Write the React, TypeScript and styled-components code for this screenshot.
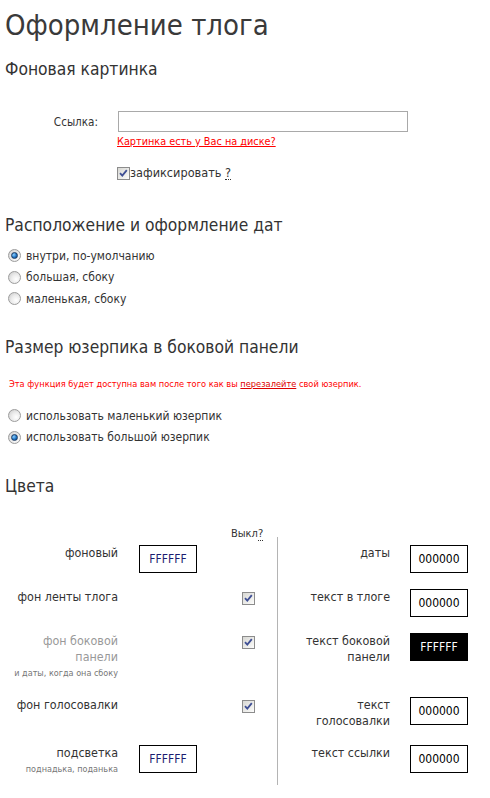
import React from 'react';
import styled, { createGlobalStyle } from 'styled-components';

const GlobalStyle = createGlobalStyle`
  body {
    margin: 0;
    background: #fff;
    color: #333;
    font-family: "DejaVu Sans Condensed", "DejaVu Sans", Verdana, sans-serif;
  }
`;

const Page = styled.div`
  padding: 0 5px 10px;
`;

const Title = styled.h1`
  margin: 5px 0 0;
  font-size: 29px;
  line-height: 40px;
  font-weight: normal;
  color: #3a3a3a;
`;

const Heading = styled.h2<{ $top: number }>`
  margin: ${({ $top }) => $top}px 0 0;
  font-size: 17.3px;
  line-height: 24px;
  font-weight: normal;
  color: #333;
`;

const FieldRow = styled.div`
  display: flex;
  align-items: center;
  margin-top: 30px;
`;

const FieldLabel = styled.label`
  width: 93px;
  padding-right: 20px;
  text-align: right;
  font-size: 11.6px;
`;

const TextInput = styled.input`
  width: 290px;
  height: 21px;
  box-sizing: border-box;
  border: 1px solid #a9a9a9;
  padding: 0 3px;
  font: inherit;
  font-size: 12px;
`;

const Indented = styled.div<{ $top: number }>`
  margin: ${({ $top }) => $top}px 0 0 112px;
  font-size: 12.6px;
  line-height: 16px;
  display: flex;
  align-items: center;
`;

const RedLink = styled.a`
  color: #f00;
  font-size: 10.8px;
  line-height: 14px;
  text-decoration: underline;
  cursor: pointer;
`;

const Hint = styled.span`
  border-bottom: 1px dotted #333;
  line-height: 13px;
  cursor: help;
`;

const CheckBox = styled.span<{ $top?: number }>`
  display: inline-flex;
  align-items: center;
  justify-content: center;
  width: 13px;
  height: 13px;
  box-sizing: border-box;
  margin-top: ${({ $top }) => $top ?? 0}px;
  border: 1px solid #8c8c8c;
  background: linear-gradient(135deg, #d8d8d4 0%, #f4f4f2 80%, #fff 100%);
  flex-shrink: 0;
`;

const RadioList = styled.div<{ $top: number }>`
  margin-top: ${({ $top }) => $top}px;
  padding-left: 3px;
`;

const RadioRow = styled.label`
  display: flex;
  align-items: center;
  height: 21.5px;
  font-size: 12px;
  gap: 5px;
`;

const Radio = styled.span<{ $on?: boolean }>`
  position: relative;
  width: 13px;
  height: 13px;
  box-sizing: border-box;
  border-radius: 50%;
  border: 1px solid #9c9c9c;
  background: radial-gradient(circle at 65% 65%, #fff 0%, #ececec 45%, #c8c8c8 100%);
  flex-shrink: 0;

  &::after {
    content: '';
    display: ${({ $on }) => ($on ? 'block' : 'none')};
    position: absolute;
    left: 2px;
    top: 2px;
    width: 7px;
    height: 7px;
    box-sizing: border-box;
    border-radius: 50%;
    border: 1px solid #1d3c63;
    background: radial-gradient(circle at 35% 35%, #8fd0ff 0%, #1f74c4 55%, #0b3f78 100%);
  }
`;

const Notice = styled.p`
  margin: 18px 0 0 4px;
  font-size: 9.2px;
  line-height: 13px;
  color: #f00;

  u {
    color: #d00;
  }
`;

const ColorTable = styled.div`
  margin-top: 22.5px;
`;

const ColorRow = styled.div`
  display: grid;
  grid-template-columns: 113px 113px 46px 113px 1fr;
  font-size: 12.4px;
  line-height: 16px;
`;

const Cell = styled.div<{ $divider?: boolean }>`
  padding: 8px 0;
  border-left: ${({ $divider }) => ($divider ? '1px solid #b4b4b4' : 'none')};
`;

const HeadCell = styled.div`
  box-sizing: border-box;
  height: 16px;
  padding-top: 6px;
  font-size: 11px;
  line-height: 10px;
`;

const Label = styled(Cell)<{ $muted?: boolean }>`
  text-align: right;
  color: ${({ $muted }) => ($muted ? '#999' : '#333')};
`;

const Note = styled.div`
  font-size: 9px;
  line-height: 16px;
  color: #777;
`;

const SwatchCell = styled(Cell)<{ $gap: number }>`
  padding-left: ${({ $gap }) => $gap}px;
`;

const CheckCell = styled(Cell)`
  padding-left: 11px;
  display: flex;
  align-items: flex-start;
`;

const Swatch = styled.div<{ $bg: string; $fg: string }>`
  width: 58px;
  height: 28px;
  box-sizing: border-box;
  border: 1px solid #000;
  background: ${({ $bg }) => $bg};
  color: ${({ $fg }) => $fg};
  font-size: 12px;
  display: flex;
  align-items: center;
  justify-content: center;
`;

const Check = ({ top }: { top?: number }) => (
  <CheckBox $top={top}>
    <svg width="9" height="9" viewBox="0 0 9 9">
      <path d="M1 4.2 L3.3 6.6 L7.8 1.2" fill="none" stroke="#3f4f94" strokeWidth="1.8" />
    </svg>
  </CheckBox>
);

type Side = { label: React.ReactNode; muted?: boolean; note?: string; swatch?: [string, string, string]; check?: boolean };

const rows: { left: Side; right: Side }[] = [
  {
    left: { label: 'фоновый', swatch: ['FFFFFF', '#fff', '#1c1c70'] },
    right: { label: 'даты', swatch: ['000000', '#fff', '#000'] },
  },
  {
    left: { label: 'фон ленты тлога', check: true },
    right: { label: 'текст в тлоге', swatch: ['000000', '#fff', '#000'] },
  },
  {
    left: { label: <>фон боковой<br />панели</>, muted: true, note: 'и даты, когда она сбоку', check: true },
    right: { label: <>текст боковой<br />панели</>, swatch: ['FFFFFF', '#000', '#fff'] },
  },
  {
    left: { label: 'фон голосовалки', check: true },
    right: { label: <>текст<br />голосовалки</>, swatch: ['000000', '#fff', '#000'] },
  },
  {
    left: { label: 'подсветка', note: 'поднадька, поданька', swatch: ['FFFFFF', '#fff', '#1c1c70'] },
    right: { label: 'текст ссылки', swatch: ['000000', '#fff', '#000'] },
  },
];

const App: React.FC = () => (
  <Page>
    <GlobalStyle />
    <Title>Оформление тлога</Title>

    <Heading $top={12}>Фоновая картинка</Heading>
    <FieldRow>
      <FieldLabel>Ссылка:</FieldLabel>
      <TextInput type="text" />
    </FieldRow>
    <Indented $top={3}>
      <RedLink>Картинка есть у Вас на диске?</RedLink>
    </Indented>
    <Indented $top={16}>
      <Check />
      <span>зафиксировать&nbsp;</span>
      <Hint>?</Hint>
    </Indented>

    <Heading $top={32}>Расположение и оформление дат</Heading>
    <RadioList $top={8}>
      <RadioRow><Radio $on />внутри, по-умолчанию</RadioRow>
      <RadioRow><Radio />большая, сбоку</RadioRow>
      <RadioRow><Radio />маленькая, сбоку</RadioRow>
    </RadioList>

    <Heading $top={25.5}>Размер юзерпика в боковой панели</Heading>
    <Notice>
      Эта функция будет доступна вам после того как вы <u>перезалейте</u> свой юзерпик.
    </Notice>
    <RadioList $top={15}>
      <RadioRow><Radio />использовать маленький юзерпик</RadioRow>
      <RadioRow><Radio $on />использовать большой юзерпик</RadioRow>
    </RadioList>

    <Heading $top={26}>Цвета</Heading>
    <ColorTable>
      <ColorRow>
        <div />
        <div />
        <HeadCell>Выкл<Hint>?</Hint></HeadCell>
        <div />
        <div />
      </ColorRow>
      {rows.map((r, i) => (
        <ColorRow key={i}>
          <Label $muted={r.left.muted}>
            {r.left.label}
            {r.left.note && <Note>{r.left.note}</Note>}
          </Label>
          <SwatchCell $gap={21}>
            {r.left.swatch && (
              <Swatch $bg={r.left.swatch[1]} $fg={r.left.swatch[2]}>{r.left.swatch[0]}</Swatch>
            )}
          </SwatchCell>
          <CheckCell>{r.left.check && <Check top={3} />}</CheckCell>
          <Label $divider>{r.right.label}</Label>
          <SwatchCell $gap={20}>
            {r.right.swatch && (
              <Swatch $bg={r.right.swatch[1]} $fg={r.right.swatch[2]}>{r.right.swatch[0]}</Swatch>
            )}
          </SwatchCell>
        </ColorRow>
      ))}
    </ColorTable>
  </Page>
);

export default App;
